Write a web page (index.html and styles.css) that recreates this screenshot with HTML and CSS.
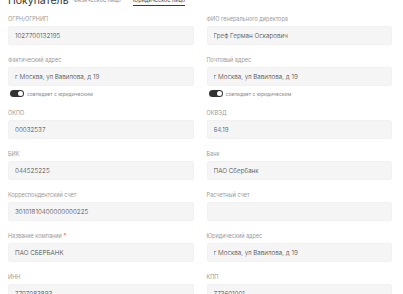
FILE: index.html
```html
<!DOCTYPE html>
<html lang="ru">
<head>
  <meta charset="UTF-8">
  <meta name="viewport" content="width=device-width, initial-scale=1.0">
  <title>Покупатель</title>
  <link rel="stylesheet" href="styles.css">
</head>
<body>
  <header class="buyer-head">
    <h2>Покупатель</h2>
    <nav class="tabs">
      <span class="tab">Физическое лицо</span>
      <span class="tab active">Юридическое лицо</span>
    </nav>
  </header>

  <form class="buyer-form">
    <div class="field">
      <label>ОГРН/ОГРНИП</label>
      <input type="text" value="1027700132195">
    </div>
    <div class="field">
      <label>ФИО генерального директора</label>
      <input type="text" value="Греф Герман Оскарович">
    </div>

    <div class="field">
      <label>Фактический адрес</label>
      <input type="text" value="г Москва, ул Вавилова, д 19">
      <div class="switch-row">
        <span class="switch on"></span>
        <span>совпадает с юридическим</span>
      </div>
    </div>
    <div class="field">
      <label>Почтовый адрес</label>
      <input type="text" value="г Москва, ул Вавилова, д 19">
      <div class="switch-row">
        <span class="switch on"></span>
        <span>совпадает с юридическим</span>
      </div>
    </div>

    <div class="field">
      <label>ОКПО</label>
      <input type="text" value="00032537">
    </div>
    <div class="field">
      <label>ОКВЭД</label>
      <input type="text" value="64.19">
    </div>

    <div class="field">
      <label>БИК</label>
      <input type="text" value="044525225">
    </div>
    <div class="field">
      <label>Банк</label>
      <input type="text" value="ПАО Сбербанк">
    </div>

    <div class="field">
      <label>Корреспондентский счет</label>
      <input type="text" value="30101810400000000225">
    </div>
    <div class="field">
      <label>Расчетный счет</label>
      <input type="text" value="">
    </div>

    <div class="field">
      <label>Название компании <span class="req">*</span></label>
      <input type="text" value="ПАО СБЕРБАНК">
    </div>
    <div class="field">
      <label>Юридический адрес</label>
      <input type="text" value="г Москва, ул Вавилова, д 19">
    </div>

    <div class="field">
      <label>ИНН</label>
      <input type="text" value="7707083893">
    </div>
    <div class="field">
      <label>КПП</label>
      <input type="text" value="773601001">
    </div>
  </form>
</body>
</html>
```

FILE: styles.css
```css
body {
  font-family: Inter, "Open Sans", sans-serif;
  margin: 0;
  padding: 0 11px 0 8px;
  background: #fff;
  color: #333;
  overflow: hidden;
}

.buyer-head {
  display: flex;
  align-items: flex-end;
  gap: 5px;
  margin-top: -6px;
  margin-bottom: 7px;
}
.buyer-head h2 {
  margin: 0;
  font-size: 10.5px;
  line-height: 14px;
  font-weight: 400;
  color: #333;
}
.tabs {
  display: flex;
  gap: 12px;
  margin-bottom: 2px;
}
.tab {
  font-size: 5.5px;
  line-height: 8px;
  padding-bottom: 1px;
  color: #888;
  border-bottom: 1px solid transparent;
}
.tab.active {
  color: #444;
  border-bottom-color: #2c3a66;
}

.buyer-form {
  display: grid;
  grid-template-columns: 1fr 1fr;
  column-gap: 13px;
  row-gap: 11px;
}
.field {
  display: flex;
  flex-direction: column;
}
.field label {
  font-size: 5.5px;
  line-height: 8px;
  color: #999;
  margin-bottom: 3px;
}
.req {
  color: #e53935;
}
.field input {
  height: 19px;
  box-sizing: border-box;
  border: 1px solid #f1f1f1;
  border-radius: 2px;
  background: #f5f5f5;
  padding: 0 6px;
  font-family: inherit;
  font-size: 6.3px;
  font-weight: 300;
  color: #444;
  outline: none;
}

.switch-row {
  display: flex;
  align-items: center;
  gap: 3px;
  margin-top: 3px;
  height: 9px;
  font-size: 5px;
  color: #888;
}
.switch {
  width: 14px;
  height: 7px;
  border-radius: 4px;
  background: #333;
  position: relative;
  margin-left: 2px;
}
.switch.on::after {
  content: "";
  position: absolute;
  top: 1px;
  right: 1px;
  width: 5px;
  height: 5px;
  border-radius: 50%;
  background: #fff;
}
```
